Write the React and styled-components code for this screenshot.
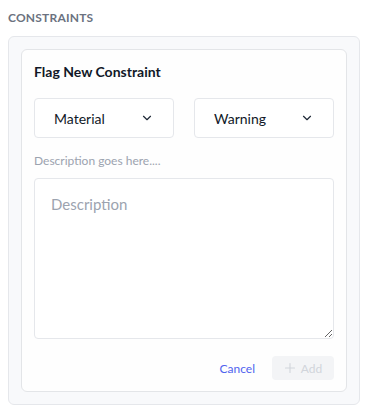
import React from 'react';
import styled, { createGlobalStyle } from 'styled-components';

const GlobalStyle = createGlobalStyle`
  body {
    margin: 0;
    background: #ffffff;
    font-family: Lato, "Noto Sans", sans-serif;
  }
`;

const Page = styled.div`
  padding: 10px 6px 10px 8px;
`;

const SectionLabel = styled.div`
  font-size: 12px;
  font-weight: 700;
  color: #6b7280;
  letter-spacing: 0.2px;
  line-height: 16px;
  margin-bottom: 10px;
`;

const Panel = styled.div`
  background: #f8f9fb;
  border: 1px solid #e5e7eb;
  border-radius: 6px;
  padding: 12px;
`;

const Card = styled.div`
  background: #fefefe;
  border: 1px solid #e3e5e8;
  border-radius: 6px;
  padding: 12px 12px 11px 12px;
  display: flex;
  flex-direction: column;
`;

const Title = styled.h3`
  margin: 0 0 16px 0;
  font-size: 14px;
  font-weight: 700;
  color: #111827;
  line-height: 20px;
`;

const SelectRow = styled.div`
  display: grid;
  grid-template-columns: 1fr 1fr;
  gap: 20px;
`;

const Select = styled.button`
  height: 40px;
  display: flex;
  align-items: center;
  justify-content: space-between;
  padding: 0 19px 0 19px;
  background: #ffffff;
  border: 1px solid #e5e7eb;
  border-radius: 4px;
  font-family: inherit;
  font-size: 14px;
  color: #111827;
  cursor: pointer;
`;

const Hint = styled.div`
  margin-top: 15px;
  font-size: 12px;
  color: #9ca3af;
  line-height: 16px;
`;

const TextArea = styled.textarea`
  margin-top: 9px;
  height: 161px;
  box-sizing: border-box;
  width: 100%;
  padding: 16px;
  border: 1px solid #e5e7eb;
  border-radius: 4px;
  font-family: inherit;
  font-size: 15px;
  color: #111827;
  background: #ffffff;
  &::placeholder {
    color: #9ca3af;
  }
`;

const Actions = styled.div`
  display: flex;
  justify-content: flex-end;
  align-items: center;
  gap: 17px;
  margin-top: 17px;
`;

const LinkButton = styled.button`
  background: none;
  border: none;
  padding: 0;
  font-family: inherit;
  font-size: 12px;
  color: #5063ee;
  cursor: pointer;
`;

const AddButton = styled.button`
  display: flex;
  align-items: center;
  justify-content: center;
  gap: 5px;
  height: 24px;
  width: 62px;
  background: #f3f4f6;
  border: none;
  border-radius: 4px;
  font-family: inherit;
  font-size: 12px;
  color: #d1d5db;
`;

const Chevron = () => (
  <svg width="14" height="14" viewBox="0 0 24 24" fill="none" stroke="#1f2937" strokeWidth="2" strokeLinecap="round" strokeLinejoin="round">
    <path d="M6 9l6 6 6-6" />
  </svg>
);

const Plus = () => (
  <svg width="12" height="12" viewBox="0 0 24 24" fill="none" stroke="#d1d5db" strokeWidth="2.2" strokeLinecap="round">
    <path d="M12 3v18M3 12h18" />
  </svg>
);

export default function App() {
  return (
    <Page>
      <GlobalStyle />
      <SectionLabel>CONSTRAINTS</SectionLabel>
      <Panel>
        <Card>
          <Title>Flag New Constraint</Title>
          <SelectRow>
            <Select>
              <span>Material</span>
              <Chevron />
            </Select>
            <Select>
              <span>Warning</span>
              <Chevron />
            </Select>
          </SelectRow>
          <Hint>Description goes here....</Hint>
          <TextArea placeholder="Description" />
          <Actions>
            <LinkButton>Cancel</LinkButton>
            <AddButton disabled>
              <Plus />
              Add
            </AddButton>
          </Actions>
        </Card>
      </Panel>
    </Page>
  );
}
